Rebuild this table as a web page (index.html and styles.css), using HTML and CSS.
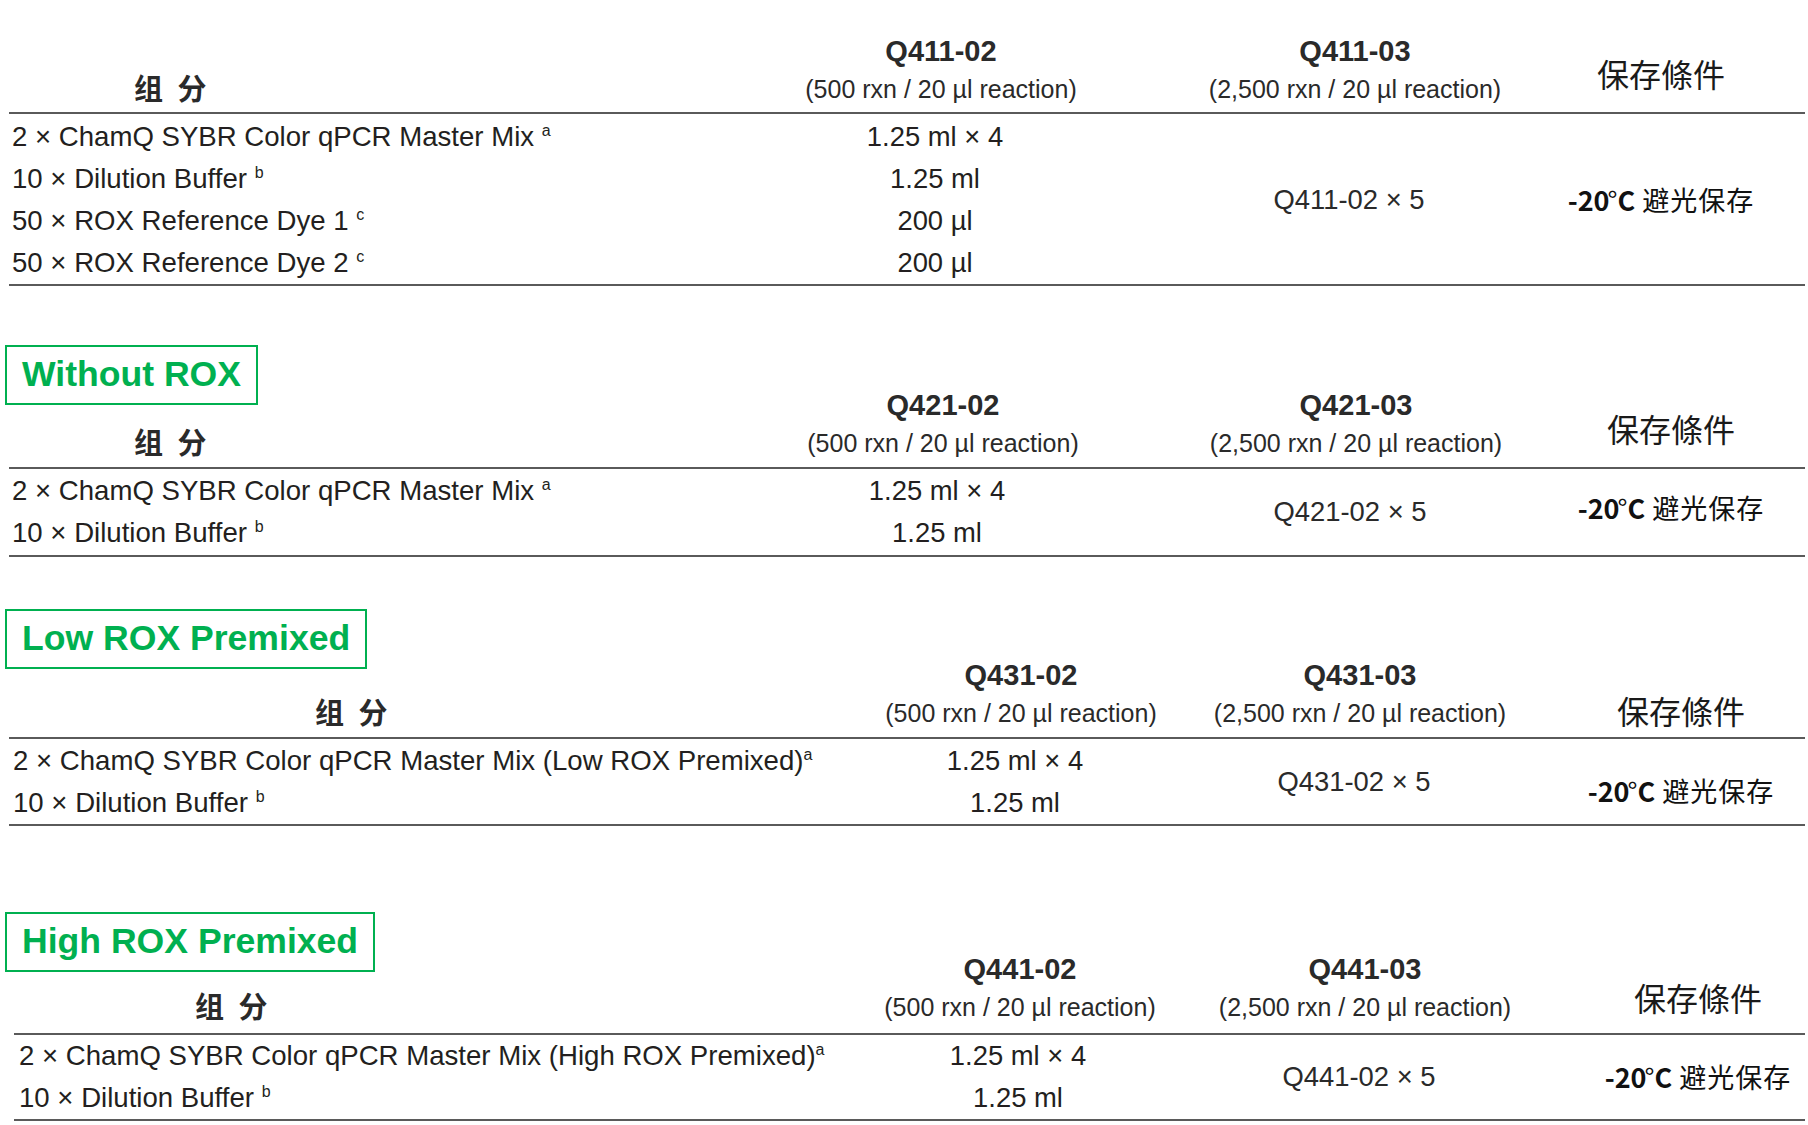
FILE: index.html
```html
<!DOCTYPE html>
<html lang="zh">
<head>
<meta charset="utf-8">
<title>ChamQ SYBR Color qPCR Master Mix</title>
<link rel="stylesheet" href="styles.css">
</head>
<body>
<main class="page">

  <section class="sec s1">
    <div class="tbl">
      <div class="head">
        <div class="comp">组 分</div>
        <div class="code c2">Q411-02</div>
        <div class="code c3">Q411-03</div>
        <div class="sub c2">(500 rxn / 20 µl reaction)</div>
        <div class="sub c3">(2,500 rxn / 20 µl reaction)</div>
        <div class="hstore">保存條件</div>
      </div>
      <div class="body rows4">
        <div class="name">2 × ChamQ SYBR Color qPCR Master Mix <sup>a</sup></div>
        <div class="qty">1.25 ml × 4</div>
        <div class="name">10 × Dilution Buffer <sup>b</sup></div>
        <div class="qty">1.25 ml</div>
        <div class="name">50 × ROX Reference Dye 1 <sup>c</sup></div>
        <div class="qty">200 µl</div>
        <div class="name">50 × ROX Reference Dye 2 <sup>c</sup></div>
        <div class="qty">200 µl</div>
        <div class="pack">Q411-02 × 5</div>
        <div class="store"><b>-20</b><span class="deg">°</span><b>C</b> 避光保存</div>
      </div>
    </div>
  </section>

  <section class="sec s2">
    <div class="tbl">
      <div class="head">
        <div class="label">Without ROX</div>
        <div class="comp">组 分</div>
        <div class="code c2">Q421-02</div>
        <div class="code c3">Q421-03</div>
        <div class="sub c2">(500 rxn / 20 µl reaction)</div>
        <div class="sub c3">(2,500 rxn / 20 µl reaction)</div>
        <div class="hstore">保存條件</div>
      </div>
      <div class="body rows2">
        <div class="name">2 × ChamQ SYBR Color qPCR Master Mix <sup>a</sup></div>
        <div class="qty">1.25 ml × 4</div>
        <div class="name">10 × Dilution Buffer <sup>b</sup></div>
        <div class="qty">1.25 ml</div>
        <div class="pack">Q421-02 × 5</div>
        <div class="store"><b>-20</b><span class="deg">°</span><b>C</b> 避光保存</div>
      </div>
    </div>
  </section>

  <section class="sec s3">
    <div class="tbl">
      <div class="head">
        <div class="label">Low ROX Premixed</div>
        <div class="comp">组 分</div>
        <div class="code c2">Q431-02</div>
        <div class="code c3">Q431-03</div>
        <div class="sub c2">(500 rxn / 20 µl reaction)</div>
        <div class="sub c3">(2,500 rxn / 20 µl reaction)</div>
        <div class="hstore">保存條件</div>
      </div>
      <div class="body rows2">
        <div class="name">2 × ChamQ SYBR Color qPCR Master Mix (Low ROX Premixed)<sup>a</sup></div>
        <div class="qty">1.25 ml × 4</div>
        <div class="name">10 × Dilution Buffer <sup>b</sup></div>
        <div class="qty">1.25 ml</div>
        <div class="pack">Q431-02 × 5</div>
        <div class="store"><b>-20</b><span class="deg">°</span><b>C</b> 避光保存</div>
      </div>
    </div>
  </section>

  <section class="sec s4">
    <div class="tbl">
      <div class="head">
        <div class="label">High ROX Premixed</div>
        <div class="comp">组 分</div>
        <div class="code c2">Q441-02</div>
        <div class="code c3">Q441-03</div>
        <div class="sub c2">(500 rxn / 20 µl reaction)</div>
        <div class="sub c3">(2,500 rxn / 20 µl reaction)</div>
        <div class="hstore">保存條件</div>
      </div>
      <div class="body rows2">
        <div class="name">2 × ChamQ SYBR Color qPCR Master Mix (High ROX Premixed)<sup>a</sup></div>
        <div class="qty">1.25 ml × 4</div>
        <div class="name">10 × Dilution Buffer <sup>b</sup></div>
        <div class="qty">1.25 ml</div>
        <div class="pack">Q441-02 × 5</div>
        <div class="store"><b>-20</b><span class="deg">°</span><b>C</b> 避光保存</div>
      </div>
    </div>
  </section>

</main>
</body>
</html>
```

FILE: styles.css
```css
html, body {
  margin: 0;
  padding: 0;
  background: #ffffff;
}

body {
  font-family: "Liberation Sans", Arial, sans-serif;
  color: #231f20;
  overflow: hidden;
}

.page {
  padding-top: 32px;
}

/* ---------- per-table settings ---------- */
.s1 {
  --x0: 9px;
  --cols: 725px 414px 414px 198px;
  --comp: 125px;
  --label-mb: 0px;
  --head-pb: 4px;
  --hstore-mb: 16px;
  --body-pt: 2px;
  --body-pb: 0px;
  --name-pl: 3px;
}
.s2 {
  margin-top: 59px;
  --x0: 9px;
  --cols: 727px 414px 412px 218px;
  --comp: 125px;
  --label-mb: 19px;
  --head-pb: 5px;
  --hstore-mb: 15px;
  --body-pt: 1px;
  --body-pb: 1px;
  --name-pl: 3px;
}
.s3 {
  margin-top: 52px;
  --x0: 9px;
  --cols: 873px 278px 400px 242px;
  --comp: 306px;
  --label-mb: 25px;
  --head-pb: 5px;
  --hstore-mb: 3px;
  --body-pt: 1px;
  --body-pb: 0px;
  --name-pl: 4px;
}
.s4 {
  margin-top: 86px;
  --x0: 14px;
  --cols: 887px 238px 452px 214px;
  --comp: 181px;
  --label-mb: 16px;
  --head-pb: 7px;
  --hstore-mb: 10px;
  --body-pt: 0px;
  --body-pb: 0px;
  --name-pl: 5px;
}

/* ---------- table frame ---------- */
.tbl {
  margin-left: var(--x0);
  margin-right: 3px;
}

.head,
.body {
  display: grid;
  grid-template-columns: var(--cols);
  border-bottom: 2px solid #5a5a5a;
}

.head {
  grid-template-rows: auto 38px;
  padding-bottom: var(--head-pb);
}

.body {
  padding-top: var(--body-pt);
  padding-bottom: var(--body-pb);
  grid-auto-rows: 42px;
}

/* ---------- green section labels ---------- */
.label {
  grid-column: 1;
  grid-row: 1;
  justify-self: start;
  align-self: start;
  margin-left: calc(5px - var(--x0));
  margin-bottom: var(--label-mb);
  height: 60px;
  box-sizing: border-box;
  border: 2px solid #00b050;
  padding: 0 15px 0 15px;
  font-size: 35.6px;
  font-weight: 700;
  line-height: 55px;
  color: #00b050;
  white-space: nowrap;
}

/* ---------- header cells ---------- */
.comp {
  grid-column: 1;
  grid-row: 2;
  justify-self: start;
  align-self: start;
  margin-left: var(--comp);
  font-family: "Noto Sans CJK SC", sans-serif;
  font-size: 29px;
  font-weight: 700;
  line-height: 34px;
  word-spacing: 8px;
  color: #2a2a2a;
}

.code,
.sub {
  justify-self: center;
  white-space: nowrap;
  line-height: 38px;
}

.code {
  grid-row: 1;
  align-self: end;
  font-size: 29px;
  font-weight: 700;
  color: #2a2a2a;
}

.sub {
  grid-row: 2;
  font-size: 25px;
  color: #2a2a2a;
}

.c2 { grid-column: 2; }
.c3 { grid-column: 3; }

.hstore {
  grid-column: 4;
  grid-row: 1 / 3;
  justify-self: center;
  align-self: end;
  margin-bottom: var(--hstore-mb);
  font-family: "Noto Sans CJK TC", sans-serif;
  font-size: 32px;
  line-height: 38px;
  color: #1a1a1a;
  white-space: nowrap;
}

/* ---------- body cells ---------- */
.name {
  grid-column: 1;
  padding-left: var(--name-pl);
  font-size: 27.6px;
  line-height: 42px;
  white-space: nowrap;
}

.name sup {
  font-size: 16px;
  line-height: 0;
  vertical-align: 10px;
}

.qty {
  grid-column: 2;
  justify-self: center;
  margin-right: 12px;
  font-size: 27.4px;
  line-height: 42px;
  white-space: nowrap;
}

.s4 .qty {
  margin-right: 4px;
}

.pack {
  grid-column: 3;
  justify-self: center;
  align-self: center;
  margin-right: 12px;
  font-size: 27.4px;
  line-height: 42px;
  white-space: nowrap;
  color: #2a2a2a;
}

.rows4 .pack,
.rows4 .store { grid-row: 1 / 5; }
.rows2 .pack,
.rows2 .store { grid-row: 1 / 3; }

.store {
  grid-column: 4;
  justify-self: center;
  align-self: center;
  font-family: "Noto Sans CJK TC", sans-serif;
  font-size: 27px;
  line-height: 42px;
  letter-spacing: 1px;
  color: #111;
  white-space: nowrap;
}

.s2 .store { margin-bottom: 8px; }
.s3 .store { margin-top: 18px; }

.store b {
  font-weight: 700;
  letter-spacing: 0;
}

.store .deg {
  font-weight: 400;
  letter-spacing: 0;
  margin-left: -2px;
}
```
